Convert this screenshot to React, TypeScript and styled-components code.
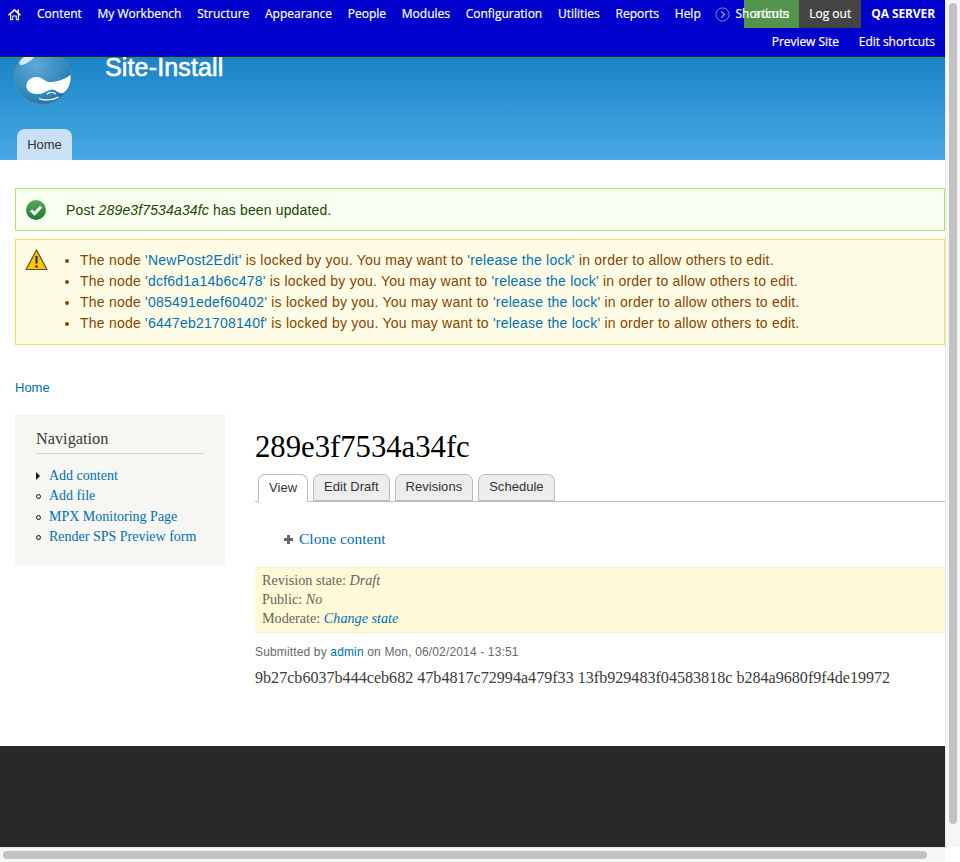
import React from "react";
import styled, { createGlobalStyle } from "styled-components";

const Global = createGlobalStyle`
  html, body { margin: 0; padding: 0; background: #fff; }
  body { width: 960px; height: 862px; overflow: hidden; }
  a { text-decoration: none; color: #0071b3; }
`;
const Shell = styled.div`
  width: 960px; height: 862px; display: grid;
  grid-template-columns: 945px 15px; grid-template-rows: 847px 15px; overflow: hidden;
`;
const Page = styled.div`
  width: 945px; height: 847px; position: relative; overflow: hidden; display: flex; flex-direction: column;
  font-family: "Liberation Sans", Arial, sans-serif;
`;
const Toolbar = styled.div`
  position: relative; z-index: 2; height: 56px; flex: none; background: #0000cc; border-bottom: 1px solid #222;
  font: 400 12px/1 "Open Sans", sans-serif; color: #fff;
  -webkit-text-stroke: 0.2px #fff;
`;
const MenuRow = styled.nav`
  position: relative; z-index: 1; display: flex; align-items: center; height: 28px; padding-left: 8px;
`;
const HomeLink = styled.span`display: flex; width: 13px; height: 13px; margin-right: 16px;`;
const MenuItem = styled.span`margin-right: 15.7px; white-space: nowrap;`;
const ShortcutToggle = styled.span`display: flex; align-items: center; gap: 5px; margin-left: -1px; white-space: nowrap;`;
const UserMenu = styled.div`
  position: absolute; top: 0; right: 0; height: 28px; display: flex; align-items: stretch; padding-right: 10px;
`;
const AdminBox = styled.span`
  width: 55px; display: flex; align-items: center; justify-content: center; background: #52944b; color: #dfe9dc; -webkit-text-stroke: 0;
`;
const LogoutBox = styled.span`
  width: 62px; display: flex; align-items: center; justify-content: center; background: #444;
`;
const ServerLabel = styled.span`
  margin-left: 10px; display: flex; align-items: center; font-weight: 700; letter-spacing: -0.1px; -webkit-text-stroke: 0;
`;
const ShortcutRow = styled.div`
  display: flex; justify-content: flex-end; align-items: center; gap: 20px; height: 28px; padding-right: 10px; letter-spacing: -0.06px;
`;
const Header = styled.header`
  height: 103px; flex: none; position: relative; overflow: hidden;
  background: linear-gradient(#1a84c6, #48a9e4); display: flex; flex-direction: column;
`;
const Brand = styled.div`display: flex; height: 72px; padding-left: 14px;`;
const Logo = styled.svg`width: 57px; height: 57px; margin-top: -9.5px; flex: none;`;
const SiteName = styled.div`
  margin: -4px 0 0 34px; font-size: 25px; line-height: 28px; font-weight: 400; color: #fff;
  letter-spacing: 0.15px; -webkit-text-stroke: 0.6px #fff;
`;
const PrimaryTabs = styled.div`display: flex; padding-left: 17px;`;
const PrimaryTab = styled.span`
  width: 55px; height: 31px; display: flex; align-items: center; justify-content: center;
  background: #c9e1f4; border-radius: 8px 8px 0 0; font-size: 13px; color: #333;
`;
const Messages = styled.div`padding: 28px 0 0 15px; display: flex; flex-direction: column; gap: 8px;`;
const Success = styled.div`
  height: 41px; border: 1px solid #b4e36c; background: #f8fff0; color: #234600; font-size: 14px; letter-spacing: 0.14px;
  display: flex; align-items: center; padding-left: 10px; gap: 20px;
`;
const Warning = styled.div`
  height: 104px; border: 1px solid #eddf5f; background: #fffce5; color: #840; font-size: 14px;
  display: flex; padding-left: 9px; box-sizing: content-box;
`;
const WarningIcon = styled.svg`width: 23px; height: 22px; margin-top: 9px; flex: none;`;
const WarnList = styled.ul`
  margin: 10px 0 0; padding: 0 0 0 18px; line-height: 21px; list-style: disc; letter-spacing: 0.225px;
  & li { margin-left: 14px; white-space: nowrap; }
`;
const Breadcrumb = styled.div`padding: 35px 0 0 15px; font-size: 13px; line-height: 16px;`;
const Content = styled.div`
  display: flex; padding: 18px 0 0 15px; flex: 1; min-height: 0;
`;
const Sidebar = styled.aside`
  width: 168px; height: 151px; flex: none; box-sizing: content-box; background: #f6f6f2; padding: 0 21px;
  font-family: "Liberation Serif", serif;
`;
const SideTitle = styled.h2`
  margin: 0; height: 40px; box-sizing: border-box; padding-top: 15px; border-bottom: 1px solid #d6d6d6;
  font-size: 16.3px; line-height: 20px; font-weight: 400; color: #3b3b3b;
`;
const SideList = styled.ul`margin: 12px 0 0; padding: 0; list-style: none; font-size: 14px; line-height: 20.4px;`;
const SideItem = styled.li`display: flex; align-items: center;`;
const Collapsed = styled.span`width: 0; height: 0; border-left: 4px solid #111; border-top: 4px solid transparent; border-bottom: 4px solid transparent; margin-right: 9px;`;
const Bullet = styled.span`width: 5px; height: 5px; border: 1px solid #111; border-radius: 50%; box-sizing: border-box; flex: none; margin-right: 8px;`;
const Main = styled.main`flex: 1; padding-left: 30px; min-width: 0; display: flex; flex-direction: column;`;
const Title = styled.h1`
  margin: 16px 0 0; font: 400 30.7px/34px "Liberation Serif", serif; color: #000;
`;
const Tabs = styled.div`
  display: flex; gap: 5px; padding-left: 3px; margin-top: 10px; height: 27px; border-bottom: 1px solid #bbb; box-sizing: content-box;
`;
const TabItem = styled.span<{ $active?: boolean }>`
  height: ${p => (p.$active ? 28 : 27)}px; box-sizing: border-box; padding: 0 10px 2px; display: flex; align-items: center;
  border: 1px solid #bbb; border-bottom: ${p => (p.$active ? "none" : "1px solid #bbb")}; letter-spacing: 0.03px;
  border-radius: 7px 7px 0 0; background: ${p => (p.$active ? "#fff" : "#ededed")}; color: #333; font-size: 13px;
`;
const ActionRow = styled.div`
  display: flex; align-items: center; gap: 6px; margin: 27px 0 0 29px; height: 20px;
  font: 400 15.5px/20px "Liberation Serif", serif;
`;
const Plus = styled.svg`width: 9px; height: 9px; flex: none;`;
const StateBox = styled.div`
  margin-top: 18px; height: 66px; box-sizing: border-box; padding: 3px 7px; background: #fff9d8; border-top: 1px solid #fbeecb; border-bottom: 1px solid #fbeecb;
  font: 400 14.2px/19px "Liberation Serif", serif; color: #68665c;
`;
const Meta = styled.div`margin-top: 12px; font-size: 12px; line-height: 14px; color: #68696b; letter-spacing: 0.15px;`;
const Body = styled.p`margin: 9px 0 0; font: 400 16.1px/20px "Liberation Serif", serif; color: #3b3b3b; white-space: nowrap;`;
const Footer = styled.footer`height: 101px; flex: none; background: #292929;`;
const VTrack = styled.div`background: #f6f6f6; border-left: 1px solid #e8e8e8; padding: 3px 3px 0 3px; box-sizing: border-box;`;
const VThumb = styled.div`width: 8px; height: 821px; border-radius: 4px; background: #c2c2c2;`;
const HTrack = styled.div`background: #f6f6f6; border-top: 1px solid #e8e8e8; padding: 3px 0 0 3px; box-sizing: border-box;`;
const HThumb = styled.div`width: 924px; height: 8px; border-radius: 4px; background: #c2c2c2;`;
const Corner = styled.div`background: #fff;`;

const menu = ["Content", "My Workbench", "Structure", "Appearance", "People", "Modules", "Configuration", "Utilities", "Reports", "Help"];
const nodes = ["NewPost2Edit", "dcf6d1a14b6c478", "085491edef60402", "6447eb21708140f"];
const nav = ["Add content", "Add file", "MPX Monitoring Page", "Render SPS Preview form"];

export default function App() {
  return (
    <Shell>
      <Global />
      <Page>
        <Toolbar>
          <MenuRow>
            <HomeLink>
              <svg viewBox="0 0 13 13" width="13" height="13"><path d="M6.5.8 0 6.8l1 1 1-.9v5.3h3.2V8.6h2.6v3.6H11V6.900l1 .9 1-1-2-1.900V1.500H9.400v2z" fill="#fff" /><path d="M6.500 3 3.200 6v5h1V7.600h4.600V11h1V6z" fill="#0000cc" /></svg>
            </HomeLink>
            {menu.map(m => <MenuItem key={m}>{m}</MenuItem>)}
            <ShortcutToggle>
              <svg viewBox="0 0 16 16" width="15" height="15" fill="none" stroke="#8e8ec8" strokeWidth="1"><circle cx="8" cy="8" r="7" /><path d="m6.500 4.500 3.500 3.500-3.500 3.500" strokeWidth="1.600" /></svg>
              Shortcuts
            </ShortcutToggle>
          </MenuRow>
          <UserMenu>
            <AdminBox>admin</AdminBox>
            <LogoutBox>Log out</LogoutBox>
            <ServerLabel>QA SERVER</ServerLabel>
          </UserMenu>
          <ShortcutRow><span>Preview Site</span><span>Edit shortcuts</span></ShortcutRow>
        </Toolbar>
        <Header>
          <Brand>
            <Logo viewBox="0 0 57 57">
              <defs>
                <radialGradient id="g" cx="0.38" cy="0.3" r="0.8"><stop offset="0" stopColor="#5fa8d6" /><stop offset="0.7" stopColor="#2f86ba" /><stop offset="1" stopColor="#25668f" /></radialGradient>
              </defs>
              <circle cx="28.500" cy="28.500" r="28" fill="url(#g)" stroke="#5f8ea8" strokeWidth="0.800" />
              <ellipse cx="13" cy="11" rx="9" ry="3.500" transform="rotate(-35 13 11)" fill="#d6ebf7" />
              <path d="M12.300 37.500C13 32 18 28.600 23 29c5 .4 8 4.400 12 5 6 .4 16-2.600 21.300-7.100 1.200 5.500-1.300 15-7.300 18.100-4 1.500-6.500-3.500-11-3.500-4 0-7 4-13 4.500-7 .5-13-3-12.700-8.500z" fill="#fff" />
              <path d="M33.300 45.800c1.500-2 6.500-2 8 0M25.700 50.800c3 1.700 13 1.700 18.300-1.600" fill="none" stroke="#fff" strokeWidth="1.300" strokeLinecap="round" />
            </Logo>
            <SiteName>Site-Install</SiteName>
          </Brand>
          <PrimaryTabs><PrimaryTab>Home</PrimaryTab></PrimaryTabs>
        </Header>
        <Messages>
          <Success>
            <svg viewBox="0 0 20 20" width="20" height="20">
              <defs><linearGradient id="ok" x1="0" y1="0" x2="0" y2="1"><stop offset="0" stopColor="#58a85c" /><stop offset="1" stopColor="#1f7a31" /></linearGradient></defs>
              <circle cx="10" cy="10" r="10" fill="url(#ok)" />
              <path d="m5 10.200 3.500 3.500L15 6.700" fill="none" stroke="#fff" strokeWidth="3" />
            </svg>
            <span>Post <em>289e3f7534a34fc</em> has been updated.</span>
          </Success>
          <Warning>
            <WarningIcon viewBox="0 0 23 22"><path d="M11.500 1 22 20.500H1z" fill="#fdc400" stroke="#5a5030" strokeWidth="1.200" strokeLinejoin="round" /><path d="M11.500 7v7.500" stroke="#333" strokeWidth="2.200" /><circle cx="11.500" cy="17.500" r="1.300" fill="#333" /></WarningIcon>
            <WarnList>
              {nodes.map(n => (
                <li key={n}>The node <a>'{n}'</a> is locked by you. You may want to <a>'release the lock'</a> in order to allow others to edit.</li>
              ))}
            </WarnList>
          </Warning>
        </Messages>
        <Breadcrumb><a>Home</a></Breadcrumb>
        <Content>
          <Sidebar>
            <SideTitle>Navigation</SideTitle>
            <SideList>
              {nav.map((n, i) => (
                <SideItem key={n}>{i === 0 ? <Collapsed /> : <Bullet />}<a>{n}</a></SideItem>
              ))}
            </SideList>
          </Sidebar>
          <Main>
            <Title>289e3f7534a34fc</Title>
            <Tabs>
              <TabItem $active>View</TabItem>
              <TabItem>Edit Draft</TabItem>
              <TabItem>Revisions</TabItem>
              <TabItem>Schedule</TabItem>
            </Tabs>
            <ActionRow>
              <Plus viewBox="0 0 9 9"><path d="M3 0h3v3h3v3H6v3H3V6H0V3h3z" fill="#666" /></Plus>
              <a>Clone content</a>
            </ActionRow>
            <StateBox>
              <div>Revision state: <em>Draft</em></div>
              <div>Public: <em>No</em></div>
              <div>Moderate: <a><em>Change state</em></a></div>
            </StateBox>
            <Meta>Submitted by <a>admin</a> on Mon, 06/02/2014 - 13:51</Meta>
            <Body>9b27cb6037b444ceb682 47b4817c72994a479f33 13fb929483f04583818c b284a9680f9f4de19972</Body>
          </Main>
        </Content>
        <Footer />
      </Page>
      <VTrack><VThumb /></VTrack>
      <HTrack><HThumb /></HTrack>
      <Corner />
    </Shell>
  );
}
